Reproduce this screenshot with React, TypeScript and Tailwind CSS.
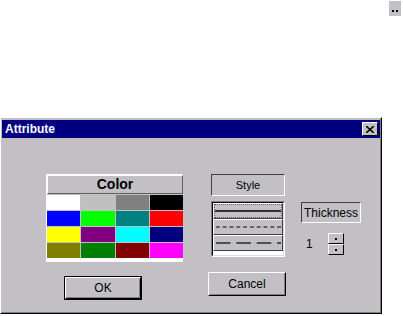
const swatches = [
  '#ffffff', '#c0c0c0', '#808080', '#000000',
  '#0000ff', '#00ff00', '#008080', '#ff0000',
  '#ffff00', '#800080', '#00ffff', '#000080',
  '#808000', '#008000', '#800000', '#ff00ff',
];

function Button({ label, isDefault }: { label: string; isDefault?: boolean }) {
  return (
    <div className={`h-[24px] w-[78px] ${isDefault ? 'border border-black' : ''}`}>
      <div className="h-full border border-t-white border-l-white border-r-black border-b-black">
        <div className="flex h-full items-center justify-center border border-transparent border-r-[#808080] border-b-[#808080] text-[12px] text-black">
          {label}
        </div>
      </div>
    </div>
  );
}

function LineItem({ kind, selected }: { kind: 'solid' | 'dot' | 'dash'; selected?: boolean }) {
  return (
    <div className="h-[16px] border border-t-white border-l-white border-r-[#404040] border-b-[#404040] bg-[#c2c0c5]">
      <div className={`flex h-full items-center ${selected ? 'border border-dotted border-[#606060]' : 'border border-transparent'}`}>
        <svg width="100%" height="4" preserveAspectRatio="none" viewBox="0 0 68 4">
          {kind === 'solid' && <line x1="0" y1="2" x2="68" y2="2" stroke="#303030" strokeWidth="2" />}
          {kind === 'dot' && (
            <line x1="1" y1="2" x2="68" y2="2" stroke="#000" strokeWidth="1" strokeDasharray="4 3" />
          )}
          {kind === 'dash' && (
            <line x1="1" y1="2" x2="68" y2="2" stroke="#505050" strokeWidth="2" strokeDasharray="15 6" />
          )}
        </svg>
      </div>
    </div>
  );
}

export default function App() {
  return (
    <div
      className="h-[316px] w-[403px] overflow-hidden bg-white"
      style={{ fontFamily: '"Liberation Sans", Arial, sans-serif' }}
    >
      <div className="flex justify-end pr-[2px] pt-[1px]">
        <div className="flex h-[15px] w-[12px] items-end justify-center gap-[2px] bg-[#c2c0c5] pb-[4px]">
          <div className="h-[2px] w-[2px] bg-black" />
          <div className="h-[2px] w-[2px] bg-black" />
        </div>
      </div>

      <div className="ml-0 mt-[101px] w-[382px] border border-t-white border-l-white border-r-black border-b-black bg-[#c2c0c5]">
        <div className="h-[195px] border border-transparent border-r-[#808080] border-b-[#808080] pt-[1px]">
          <div className="flex h-[18px] items-center justify-between bg-[#000080] pl-[3px] pr-[2px]">
            <span className="text-[12px] font-bold text-white">Attribute</span>
            <div className="flex h-[14px] w-[16px] items-center justify-center border border-t-white border-l-white border-r-black border-b-black bg-[#c2c0c5]">
              <svg width="8" height="7" viewBox="0 0 8 7">
                <path d="M0 0 L8 7 M8 0 L0 7" stroke="#000" strokeWidth="1.6" />
              </svg>
            </div>
          </div>

          <div className="flex items-start pl-[44px] pt-[36px]">
            <div className="flex w-[137px] flex-col">
              <div className="bg-white pl-px pt-px">
                <div className="flex h-[19px] items-center justify-center border border-t-white border-l-white border-r-[#606060] border-b-[#606060] bg-[#c2c0c5] text-[14px] font-bold text-black">
                  Color
                </div>
                <div className="grid grid-cols-4 gap-px bg-[#c2c0c5] pt-px">
                  {swatches.map((c) => (
                    <div key={c} className="h-[15px]" style={{ backgroundColor: c }} />
                  ))}
                </div>
                <div className="h-[4px] bg-white" />
              </div>
              <div className="ml-[18px] mt-[14px]">
                <Button label="OK" isDefault />
              </div>
            </div>

            <div className="ml-[28px] flex w-[74px] flex-col">
              <div className="flex h-[22px] items-center justify-center border border-t-[#404040] border-l-[#404040] border-r-white border-b-white text-[11px] text-black">
                Style
              </div>
              <div className="mt-[5px] border border-t-[#808080] border-l-[#808080] border-r-white border-b-white">
                <div className="h-[54px] border border-t-black border-l-black border-r-[#dcdcdc] border-b-[#dcdcdc] bg-white">
                  <LineItem kind="solid" selected />
                  <LineItem kind="dot" />
                  <LineItem kind="dash" />
                </div>
              </div>
              <div className="-ml-[3px] mt-[15px]">
                <Button label="Cancel" />
              </div>
            </div>

            <div className="ml-[16px] flex w-[60px] flex-col pt-[28px]">
              <div className="flex h-[21px] items-center justify-center border border-t-[#404040] border-l-[#404040] border-r-white border-b-white text-[12px] text-black">
                Thickness
              </div>
              <div className="mt-[10px] flex items-center">
                <span className="ml-[5px] w-[22px] text-[12px] text-black">1</span>
                <div className="flex flex-col">
                  <div className="flex h-[11px] w-[16px] items-center justify-center border border-t-white border-l-white border-r-black border-b-black">
                    <div className="h-[2px] w-[2px] bg-black" />
                  </div>
                  <div className="flex h-[11px] w-[16px] items-center justify-center border border-t-white border-l-white border-r-black border-b-black">
                    <div className="h-[2px] w-[2px] bg-black" />
                  </div>
                </div>
              </div>
            </div>
          </div>
        </div>
      </div>
    </div>
  );
}
